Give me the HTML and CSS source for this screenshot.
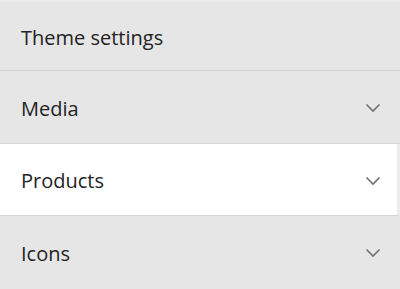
FILE: index.html
```html
<!DOCTYPE html>
<html>
<head>
<meta charset="utf-8">
<link rel="stylesheet" href="styles.css">
</head>
<body>
<div class="panel">
  <div class="row header"><span class="label">Theme settings</span></div>
  <div class="row media"><span class="label">Media</span>
    <svg class="chev" viewBox="0 0 16 10" width="16" height="10"><path d="M1.5 1.5 L8 8 L14.5 1.5" fill="none" stroke="#707070" stroke-width="1.6"/></svg>
  </div>
  <div class="row active"><span class="label">Products</span>
    <svg class="chev" viewBox="0 0 16 10" width="16" height="10"><path d="M1.5 1.5 L8 8 L14.5 1.5" fill="none" stroke="#707070" stroke-width="1.6"/></svg>
  </div>
  <div class="row last"><span class="label">Icons</span>
    <svg class="chev" viewBox="0 0 16 10" width="16" height="10"><path d="M1.5 1.5 L8 8 L14.5 1.5" fill="none" stroke="#707070" stroke-width="1.6"/></svg>
  </div>
</div>
</body>
</html>
```
FILE: styles.css
```css
html, body {
  margin: 0;
  padding: 0;
  background: #e6e6e6;
}
.panel {
  width: 400px;
  height: 289px;
  display: flex;
  flex-direction: column;
  border-top: 2px solid #ececec;
  box-sizing: border-box;
  font-family: "Open Sans", "Noto Sans", sans-serif;
}
.row {
  height: 72px;
  flex: none;
  display: flex;
  align-items: center;
  justify-content: space-between;
  padding: 2px 19px 0 21px;
  border-bottom: 1px solid #d4d4d4;
  box-sizing: border-box;
  background: #e6e6e6;
}
.header {
  height: 69px;
}
.media {
  height: 73px;
}
.row.last {
  border-bottom: none;
}
.row.active {
  background: #ffffff;
  border-right: 3px solid #ececec;
  padding-right: 16px;
}
.label {
  font-size: 20px;
  font-weight: 500;
  color: #232323;
  letter-spacing: 0;
}
.chev {
  display: block;
}
```
